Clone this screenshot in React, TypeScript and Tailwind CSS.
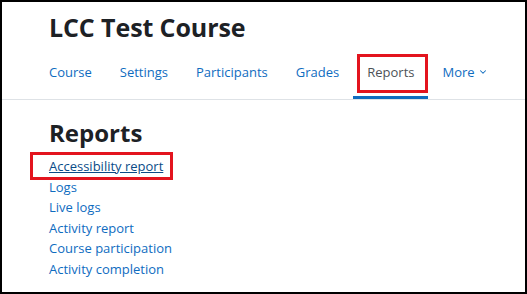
import { ChevronDown } from 'lucide-react';

const tabs = ['Course', 'Settings', 'Participants', 'Grades', 'Reports', 'More'];

const links = [
  'Accessibility report',
  'Logs',
  'Live logs',
  'Activity report',
  'Course participation',
  'Activity completion',
];

export default function App() {
  return (
    <div
      className="relative h-[294px] w-[527px] overflow-hidden border-2 border-black bg-white text-[#1d2125]"
      style={{ fontFamily: '"Open Sans", "Noto Sans", sans-serif' }}
    >
      <div className="border-b border-[#dee2e6]">
        <h1 className="pl-[47px] pt-[8px] text-[25px] font-bold leading-[34px] tracking-[-0.1px]">
          LCC Test Course
        </h1>
        <nav className="mt-[18px] flex pl-[33px]">
          {tabs.map((t) => {
            const active = t === 'Reports';
            return (
              <div
                key={t}
                className={`flex items-center gap-[3px] px-[14px] pb-[14px] text-[13px] leading-[20px] ${
                  active ? 'border-b-[3px] border-[#0f6cbf] text-[#4d5257]' : 'border-b-[3px] border-transparent text-[#0f6cbf]'
                }`}
              >
                {t}
                {t === 'More' && <ChevronDown size={10} strokeWidth={2.5} />}
              </div>
            );
          })}
        </nav>
      </div>

      <div className="pl-[47px] pt-[18px]">
        <h2 className="text-[24px] font-bold leading-[30px]">Reports</h2>
        <ul className="mt-[8px] text-[13px] leading-[20.5px]">
          {links.map((l, i) => (
            <li key={l}>
              <a className={i === 0 ? 'text-[#0a4b87] underline' : 'text-[#0f6cbf]'}>{l}</a>
            </li>
          ))}
        </ul>
      </div>

      {/* annotation boxes */}
      <div className="absolute left-[355px] top-[52px] h-[39px] w-[71px] border-[3px] border-[#e3141e]" />
      <div className="absolute left-[28px] top-[150px] h-[28px] w-[143px] border-[3px] border-[#e3141e]" />
    </div>
  );
}
